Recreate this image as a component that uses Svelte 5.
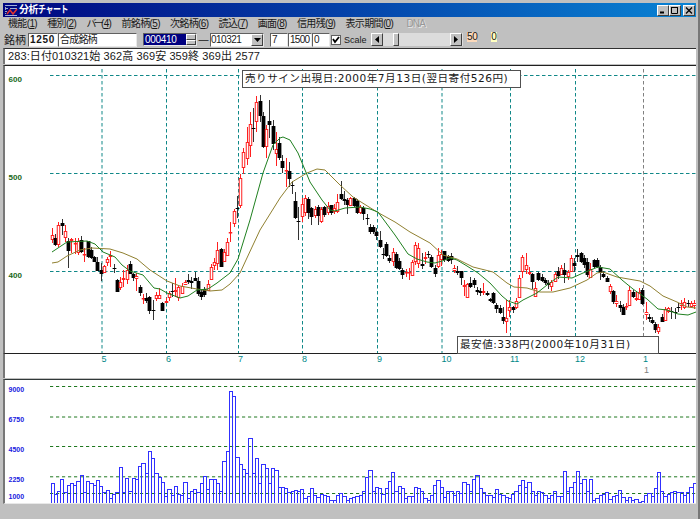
<script>
  const menu = [
    ["機能", "1"],
    ["種別", "2"],
    ["バー", "4"],
    ["前銘柄", "5"],
    ["次銘柄", "6"],
    ["読込", "7"],
    ["画面", "8"],
    ["信用残", "9"],
    ["表示期間", "0"],
  ];

  // one candle per trading day: r = up, k = down, then high, body top, body bottom, low
  const days = `
    r228,235,240,243 k234,238,245,246 r222,225,245,247 k219,223,226,235 r225,231,238,242
    k238,241,251,268 r238,239,241,253 r238,243,244,254 r238,241,253,255 k236,240,252,253
    r248,254,255,262 k241,241,257,258 k247,250,258,259 k256,257,262,262 k257,262,271,271
    k263,270,274,281 r265,266,273,273 r257,259,263,266 r251,255,257,267 k264,268,268,273
    k279,280,292,292 r277,282,288,290 r270,278,280,287 r265,270,280,284 k261,264,274,274
    k273,274,278,281 r273,276,279,291 k285,287,293,296 r294,298,299,304 k293,298,301,303
    k296,297,311,314 k300,310,311,320 r292,295,299,301 r288,295,299,299 k302,303,311,311
    r298,301,303,303 r291,293,298,301 k283,291,291,297 r278,290,292,297 r285,287,298,301
    r283,286,294,294 r280,282,285,285 k274,280,282,284 k277,281,283,289 k272,278,281,281
    k277,281,294,296 k290,292,297,300 k287,289,295,297 r280,284,291,291 r264,267,280,280
    r258,262,266,270 r242,250,264,270 k248,249,267,267 r249,252,262,262 r238,242,256,256
    r222,232,233,242 r209,211,224,227 k196,208,209,218 r174,178,206,208 r148,152,168,174
    r127,142,159,165 r112,124,146,157 k108,128,129,142 r96,102,122,132 k95,101,116,122
    k112,116,147,148 r125,129,147,158 k100,121,125,138 k120,126,144,150 r132,149,154,166
    k137,143,158,160 k155,161,168,173 r158,170,171,187 k162,171,179,187 k181,185,186,194
    k192,201,218,219 k207,221,222,240 r198,204,217,222 r195,198,213,216 k197,199,213,219
    k207,208,217,225 r206,209,216,218 k205,207,216,225 r207,209,222,223 k206,207,215,217
    r202,206,213,215 k205,205,213,215 r204,208,212,214 r194,202,212,213 k181,194,199,200
    k191,199,201,205 k198,200,205,214 r197,198,206,206 k197,198,206,207 k199,201,213,214
    r205,207,213,214 k206,208,214,220 k214,218,219,225 k224,227,232,234 k225,227,232,234
    k228,232,236,240 k231,240,247,248 k248,254,255,259 k242,244,256,257 k255,258,261,263
    r248,252,262,266 k252,254,268,269 k258,261,269,270 k268,270,275,279 r269,272,273,277
    r268,272,273,280 r260,262,276,276 r242,245,262,265 r243,248,264,268 k253,264,266,269
    r252,257,259,264 k251,254,255,258 k255,257,267,268 k265,268,274,277 r248,255,267,268
    r250,254,260,266 k251,251,260,262 k255,256,261,262 k253,256,260,264 r265,268,271,273
    k266,271,273,275 k271,271,278,285 r280,285,287,296 r283,284,298,298 k277,283,287,288
    k278,280,285,288 k287,290,292,295 k288,291,293,296 r283,291,293,295 k291,293,295,296
    k298,299,301,302 k292,293,303,304 k303,305,309,313 k305,308,313,314 k307,317,321,324
    r300,318,322,333 r300,307,311,317 k306,307,310,313 r298,301,308,309 r275,278,298,298
    r255,257,272,278 r253,265,270,274 r267,272,274,275 k273,274,282,289 r282,288,297,297
    k272,273,280,281 k274,277,281,282 k278,280,283,285 k280,283,285,289 r280,282,287,291
    r272,274,282,282 k267,271,276,279 r265,268,275,275 k263,270,275,283 r270,272,277,280
    r255,258,272,272 k258,263,266,272 k249,255,257,262 k252,253,262,263 k255,258,265,268
    k258,262,275,277 r263,269,278,278 k259,260,267,268 k258,260,267,268 k265,267,273,280
    k271,274,277,278 k276,278,282,282 r284,286,292,294 k290,291,302,304 r295,301,304,307
    k301,305,308,312 k304,307,315,315 r303,306,307,310 r286,290,306,306 k290,292,297,298
    r292,298,300,301 r288,292,300,300 k288,290,304,305 r302,312,315,320 k314,317,319,322
    k317,320,323,324 k322,324,330,333 r324,327,332,334 k314,317,322,322 r307,309,321,321
    r307,308,312,313 k307,311,312,319 k308,312,313,319 k303,307,308,312 r300,303,306,310
    r298,302,308,309 k300,303,304,307 r301,303,307,307 r300,303,306,309`;

  const step = 3.2433;
  const candles = days.trim().split(/\s+/).map((d, i) => {
    const [high, top, bottom, low] = d.slice(1).split(",").map(Number);
    return { up: d[0] === "r", x: Math.round(52.5 + i * step - 0.5) + 0.5, high, top, bottom, low };
  });

  // volume bar heights, in thirds of a pixel
  const volumes = [
    56, 23, 34, 68, 31, 50, 56, 50, 62, 81, 29, 62, 56, 50, 65, 47, 31, 35, 11, 23,
    29, 104, 31, 71, 32, 71, 68, 107, 117, 87, 154, 131, 86, 74, 59, 17, 38, 20, 47, 23,
    20, 59, 13, 32, 38, 29, 56, 77, 39, 70, 70, 56, 32, 122, 154, 333, 317, 134, 115, 99,
    86, 191, 86, 131, 56, 115, 101, 56, 101, 95, 44, 44, 43, 29, 32, 35, 32, 38, 11, 17,
    41, 20, 14, 24, 22, 17, 5, 5, 22, 26, 17, 5, 11, 14, 17, 20, 32, 74, 95, 32,
    44, 41, 24, 42, 62, 89, 32, 49, 41, 11, 17, 17, 44, 41, 32, 11, 5, 20, 52, 65,
    44, 14, 32, 32, 20, 32, 26, 61, 53, 32, 68, 81, 41, 29, 20, 20, 15, 38, 23, 20,
    15, 11, 23, 32, 50, 65, 44, 59, 32, 20, 32, 29, 20, 11, 20, 32, 17, 17, 92, 32,
    44, 59, 92, 56, 68, 32, 68, 5, 13, 20, 23, 29, 8, 17, 20, 35, 15, 5, 14, 5,
    8, 1, 4, 20, 26, 17, 41, 89, 32, 17, 23, 29, 32, 29, 29, 20, 29, 44, 56,
  ];
  const edge = (i) => Math.round(50.5 + i * step) + 0.5;

  const months = [
    { x: 102, label: "5" },
    { x: 166.5, label: "6" },
    { x: 238.5, label: "7" },
    { x: 302.5, label: "8" },
    { x: 377.5, label: "9" },
    { x: 442, label: "10" },
    { x: 510.5, label: "11" },
    { x: 575.5, label: "12" },
    { x: 643.5, label: "1", year: true },
  ];

  const prices = [
    { y: 75.5, label: "600" },
    { y: 173.5, label: "500" },
    { y: 271.5, label: "400" },
  ];

  const levels = [
    { y: 386.5, label: "9000" },
    { y: 417, label: "6750" },
    { y: 446.5, label: "4500" },
    { y: 476.8, label: "2250" },
    { y: 493.5, label: "1000" },
  ];

  const shortAverage =
    "52,252 58,248 67,242 87,241 95,244 103,252 115,257 122,265 130,271 143,275 154,288 160,289 167,293 180,298 188,296 197,290 208,289 217,283 230,273 238,259 250,220 263,173 273,145 280,138 283,137 290,140 298,153 310,182 322,200 330,210 335,211 345,208 360,207 370,209 378,212 395,235 408,254 417,259 427,262 435,263 442,261 450,258 457,260 467,266 478,273 490,283 502,296 508,301 517,304 523,300 537,293 547,285 558,277 572,278 583,273 598,267 610,269 622,280 633,289 647,299 658,309 667,310 678,314 688,315 696,312";
  const longAverage =
    "52,263 58,262 67,256 80,250 92,248 110,249 123,253 137,259 150,270 167,281 180,286 197,289 210,291 222,290 230,284 240,273 246,260 260,230 280,198 292,182 307,173 317,169 325,170 340,185 353,197 377,212 395,222 410,232 430,243 443,255 457,259 473,267 493,272 507,283 514,287 527,288 540,292 553,292 570,288 587,280 597,273 603,272 617,277 640,281 650,286 663,296 677,302 687,307 696,308";
</script>

<div class="window">
  <div class="titlebar">
    <svg class="logo" width="14" height="13" viewBox="0 0 14 13">
      <path d="M1 1.5h12M1 4.5h3M6 4.5h7M1 7.5h2M1 11.5h12" stroke="#9fb0d8" />
      <path d="M1.5 1v11" stroke="#a0a0c0" stroke-dasharray="1 1" />
      <path d="M3 10l3-4 3 4 4-5" fill="none" stroke="#e03030" stroke-width="1.6" />
    </svg>
    <h1>分析<span>チャート</span></h1>
    <div class="controls">
      <span class="btn"><svg width="10" height="9"><path d="M2 6.5h4" stroke="#000" stroke-width="2" /></svg></span>
      <span class="btn"><svg width="10" height="9"><path d="M1.5 1v6.5h6V1M1 1.5h7" fill="none" stroke="#000" /></svg></span>
      <span class="btn close"><svg width="10" height="9"><path d="M2 1.5l6 6M8 1.5l-6 6" stroke="#000" stroke-width="1.3" /></svg></span>
    </div>
  </div>

  <nav>
    {#each menu as [name, key]}
      <span><span class:kana={name === "バー"}>{name}</span>(<u>{key}</u>)</span>
    {/each}
    <span class="disabled">DNA</span>
  </nav>

  <div class="toolbar">
    <span class="caption">銘柄</span>
    <div class="field code">1250</div>
    <div class="field name">合成銘柄</div>
    <div class="field from">
      <span class="selected">000410</span>
      <span class="spin"><i></i><i></i></span>
    </div>
    <span class="dash">―</span>
    <div class="field to">
      010321
      <span class="btn drop"><svg width="7" height="4"><path d="M0 0h7L3.5 4z" /></svg></span>
    </div>
    <div class="field days">7</div>
    <div class="field max">1500</div>
    <div class="field min">0</div>
    <div class="check"><svg width="8" height="8"><path d="M1 3l2 3 4-5" fill="none" stroke="#000" stroke-width="1.8" /></svg></div>
    <span class="scale">Scale</span>
    <div class="scroll">
      <span class="btn arrow"><svg width="4" height="7"><path d="M4 0v7L0 3.5z" /></svg></span>
      <span class="btn thumb"></span>
      <span class="btn arrow"><svg width="4" height="7"><path d="M0 0v7l4-3.5z" /></svg></span>
    </div>
    <span class="value peach">50</span>
    <span class="value cream">0</span>
  </div>

  <div class="info">283:日付010321始 362高 369安 359終 369出 2577</div>

  <div class="price">
    <svg width="691" height="287" viewBox="5 66 691 287">
      {#each prices as p}
        <line class="grid" x1="50" x2="696" y1={p.y} y2={p.y} />
        <text class="plabel" x="8.5" y={p.y + 6}>{p.label}</text>
      {/each}
      {#each months as m}
        <line class="grid" class:year={m.year} x1={m.x} x2={m.x} y1="69" y2="353" />
      {/each}
      {#each candles as c}
        <g class={c.up ? "up" : "down"}>
          {#if c.up}
            <line x1={c.x} x2={c.x} y1={c.high} y2={c.top} />
            <line x1={c.x} x2={c.x} y1={c.bottom} y2={c.low} />
            <rect x={c.x - 1.25} y={c.top + 0.5} width="2.5" height={Math.max(c.bottom - c.top - 1, 0.5)} />
          {:else}
            <line x1={c.x} x2={c.x} y1={c.high} y2={c.low} />
            <rect x={c.x - 1.9} y={c.top} width="3.8" height={Math.max(c.bottom - c.top, 1)} />
          {/if}
        </g>
      {/each}
      <polyline class="long" points={longAverage} />
      <polyline class="short" points={shortAverage} />
    </svg>
    <div class="note sell">売りサイン出現日:2000年7月13日(翌日寄付526円)</div>
    <div class="note lowest">最安値:338円(2000年10月31日)</div>
  </div>

  <div class="axis">
    <svg width="691" height="24" viewBox="5 354 691 24">
      {#each months as m}
        <text x={m.x - 0.5} y="361.5">{m.label}</text>
        {#if m.year}
          <text class="year" x={m.x + 0.5} y="373">1</text>
        {/if}
      {/each}
    </svg>
  </div>

  <div class="volume">
    <svg width="691" height="123" viewBox="5 380 691 123">
      {#each levels as l}
        <line class="level" x1="50" x2="696" y1={l.y} y2={l.y} />
        <text x="8.5" y={l.y + 5.3}>{l.label}</text>
      {/each}
      {#each volumes as v, i}
        <rect x={edge(i)} y={Math.round(503 - v / 3) - 0.5} width={edge(i + 1) - edge(i)} height={v / 3 + 4} />
      {/each}
    </svg>
  </div>
</div>

<style>
  :global(body) {
    margin: 0;
    background: #c0c0c0;
  }

  .window {
    box-sizing: border-box;
    width: 700px;
    height: 519px;
    padding: 3px 2px 0 3px;
    display: flex;
    flex-direction: column;
    overflow: hidden;
    background: #c0c0c0;
    border-right: 2px solid #777;
    font-family: "Liberation Sans", "Noto Sans CJK JP", sans-serif;
    font-size: 10px;
    color: #181818;
  }

  .titlebar {
    display: flex;
    align-items: center;
    flex: none;
    height: 14px;
    padding-left: 1px;
    background: linear-gradient(90deg, #000680 0%, #0440a8 48%, #0a84d4 100%);
  }

  h1 {
    flex: 1;
    margin: 0 0 0 1px;
    color: #fff;
    font-size: 10px;
    font-weight: bold;
    line-height: 14px;
    letter-spacing: -0.6px;
    white-space: nowrap;
  }

  h1 span {
    display: inline-block;
    transform: scaleX(0.8);
    transform-origin: left;
  }

  .controls {
    display: flex;
    padding-right: 1px;
  }

  .btn {
    display: flex;
    box-sizing: border-box;
    align-items: center;
    justify-content: center;
    background: #c0c0c0;
    border: 1px solid;
    border-color: #fff #404040 #404040 #fff;
  }

  .controls .btn {
    width: 12px;
    height: 11px;
  }

  .controls .close {
    margin-left: 2px;
  }

  nav {
    display: flex;
    flex: none;
    gap: 10.2px;
    height: 14px;
    padding-left: 5px;
    line-height: 13px;
    letter-spacing: -0.65px;
    white-space: nowrap;
  }

  .kana {
    letter-spacing: -2.7px;
  }

  .disabled {
    margin-left: 3px;
    color: #989898;
    text-shadow: 1px 1px #e8e8e8;
    letter-spacing: -0.8px;
  }

  .toolbar {
    display: flex;
    flex: none;
    align-items: center;
    height: 17px;
    padding-left: 1px;
    white-space: nowrap;
  }

  .caption {
    width: 24px;
    font-size: 11px;
    line-height: 14px;
  }

  .field {
    display: flex;
    box-sizing: border-box;
    align-items: center;
    height: 14px;
    padding-left: 1px;
    overflow: hidden;
    background: #fff;
    border: 1px solid;
    border-color: #606060 #e8e8e8 #e8e8e8 #606060;
    line-height: 12px;
  }

  .code {
    width: 30px;
    font-weight: bold;
    letter-spacing: 0.7px;
  }

  .name {
    width: 79px;
    letter-spacing: -0.8px;
  }

  .from {
    width: 54px;
    height: 13px;
    margin-left: 6px;
    padding: 0;
  }

  .selected {
    width: 41px;
    padding-left: 1px;
    background: #000080;
    color: #fff;
    letter-spacing: -0.3px;
  }

  .spin {
    flex: 1;
  }

  .spin i {
    display: block;
    box-sizing: border-box;
    height: 5.5px;
    background: #c0c0c0;
    border: 1px solid;
    border-color: #fff #404040 #404040 #fff;
  }

  .dash {
    width: 13px;
    text-align: center;
  }

  .to {
    width: 54px;
    padding-left: 0;
    justify-content: space-between;
    letter-spacing: -0.5px;
  }

  .drop {
    width: 12px;
    height: 12px;
  }

  .days {
    width: 18px;
    margin-left: 6px;
  }

  .max {
    width: 24px;
    letter-spacing: -0.7px;
  }

  .min {
    width: 18px;
  }

  .check {
    display: flex;
    box-sizing: border-box;
    align-items: center;
    justify-content: center;
    width: 10px;
    height: 10px;
    margin-left: 1px;
    background: #fff;
    border: 1px solid #606060;
  }

  .scale {
    width: 30px;
    padding-left: 3px;
    font-size: 9px;
    box-sizing: border-box;
  }

  .scroll {
    display: flex;
    width: 92px;
    height: 13px;
    background: #dcdcdc;
  }

  .arrow {
    width: 12px;
  }

  .thumb {
    width: 6px;
    margin: 0 51px 0 10px;
  }

  .value {
    margin: 0 0 5px 4px;
    line-height: 10px;
    letter-spacing: -0.4px;
  }

  .peach {
    background: #fbd9bb;
  }

  .cream {
    margin-left: 14px;
    background: #ffffc0;
  }

  .info,
  .price,
  .axis,
  .volume {
    box-sizing: border-box;
    flex: none;
    width: 693px;
    background: #fff;
    border-left: 2px solid #777;
  }

  .info {
    height: 16px;
    padding-left: 3px;
    border-top: 1px solid #303030;
    font-size: 11px;
    line-height: 15px;
    letter-spacing: 0.1px;
    white-space: pre;
  }

  .price {
    position: relative;
    height: 289px;
    margin-top: 1px;
    border-top: 1px solid #202020;
    border-bottom: 1px solid #202020;
  }

  .axis {
    height: 24px;
  }

  .volume {
    height: 125px;
    margin-top: 1px;
    border-top: 1px solid #303838;
    border-bottom: 1px solid #e8e8e8;
  }

  svg {
    display: block;
  }

  .grid {
    stroke: #108888;
    stroke-dasharray: 3.5 2.5;
  }

  .grid.year {
    stroke: #808080;
  }

  .plabel {
    fill: #186818;
    font-size: 8px;
    font-weight: bold;
  }

  .up line,
  .up rect {
    fill: #fff;
    stroke: #ff2020;
  }

  .down line {
    stroke: #333;
  }

  .short,
  .long {
    fill: none;
    stroke: #208020;
  }

  .long {
    stroke: #908030;
  }

  .note {
    position: absolute;
    box-sizing: border-box;
    height: 18px;
    padding-left: 2px;
    background: #fff;
    border: 1px solid #505050;
    font-family: "DejaVu Sans", "Noto Sans CJK JP", sans-serif;
    font-size: 10.6px;
    line-height: 15px;
    letter-spacing: 0.5px;
    white-space: nowrap;
  }

  .sell {
    left: 237px;
    top: 4px;
    width: 279px;
  }

  .lowest {
    left: 452px;
    top: 270px;
    width: 202px;
  }

  .axis text {
    fill: #008888;
    font-size: 9px;
  }

  .axis .year {
    fill: #808080;
  }

  .volume text {
    fill: #1818e0;
    font-size: 7px;
    font-weight: bold;
  }

  .level {
    stroke: #207820;
    stroke-dasharray: 3.2 2.8;
  }

  .volume rect {
    fill: none;
    stroke: #3030ff;
  }
</style>
